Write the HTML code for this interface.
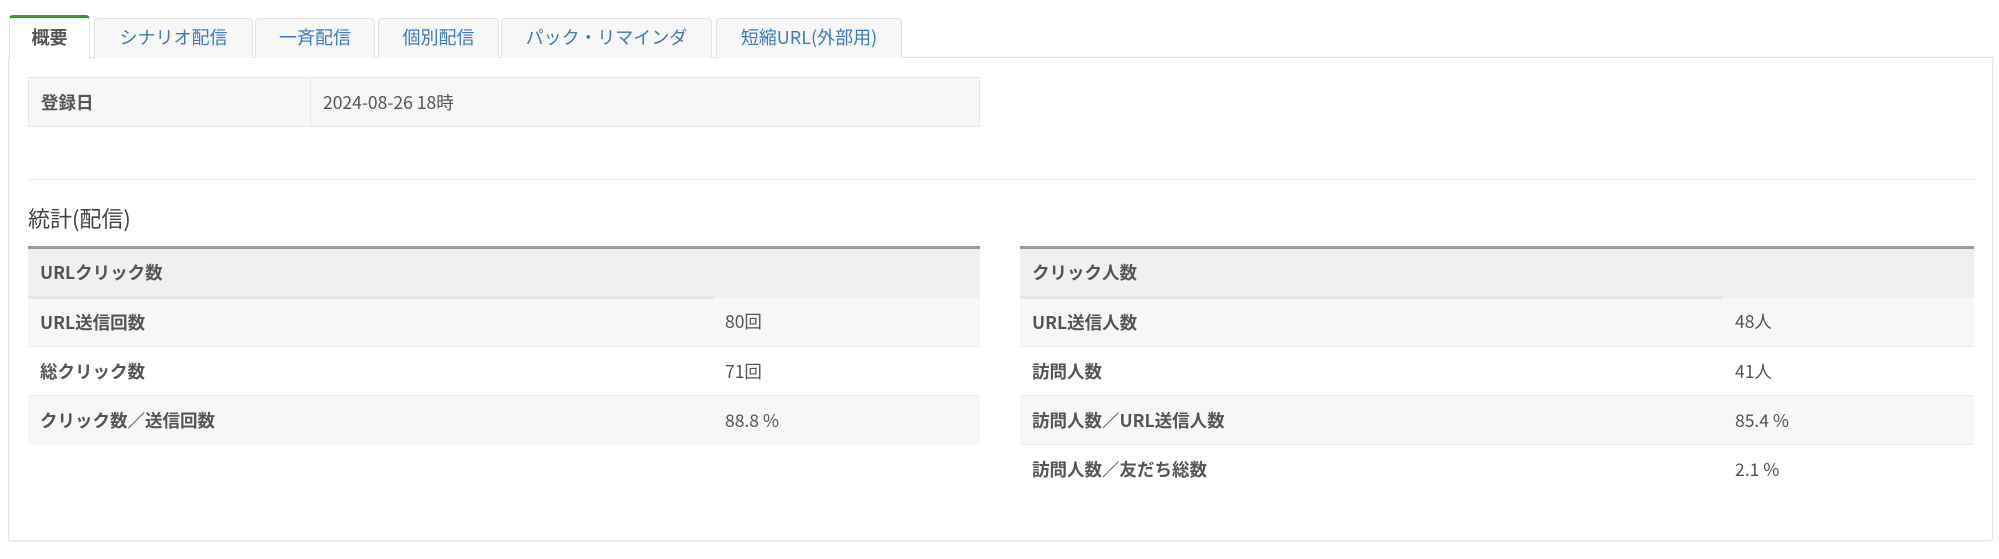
<!DOCTYPE html>
<html><head><meta charset="utf-8"><style>
*{box-sizing:border-box;margin:0;padding:0}
body{width:1999px;height:559px;background:#fff;font-family:"Noto Sans CJK JP","Liberation Sans",sans-serif;color:#555;position:relative;overflow:hidden}
.tab{position:absolute;top:18px;height:40px;border:1px solid #e3e3e3;border-bottom:none;border-radius:4px 4px 0 0;background:#f7f7f8;color:#3b7bbf;font-size:18px;text-align:center;line-height:36px}
.tab.act{top:15px;height:44px;background:#fff;border-top:3px solid #2ca02c;color:#555;font-weight:bold;line-height:38px;z-index:2}
.panel{position:absolute;left:8px;top:57px;width:1985px;height:484px;border:1px solid #e3e3e3;border-radius:0 0 3px 3px;box-shadow:0 1px 1px #eee}
.abs{position:absolute}
table{border-collapse:collapse;position:absolute;font-size:17.5px}
td{height:49px;padding:0 12px;vertical-align:middle;line-height:1.2}
.reg td{border:1px solid #e6e6e6;background:#f7f7f9;height:49px}
.st{border-top:3px solid #999}
.st tr.h td{background:#f0f0f2;font-weight:bold;height:50px}
.st tr.h td.a{border-bottom:3px solid #e3e3e5}
.st tr.o td{background:#f7f7f9}
.st tr.r td{border-top:1px solid #ececec}
.st td.l{font-weight:bold}
</style></head><body>
<div class="panel"></div>
<div class="tab act" style="left:9px;width:81px">概要</div>
<div class="tab" style="left:94px;width:159px">シナリオ配信</div>
<div class="tab" style="left:255px;width:120px">一斉配信</div>
<div class="tab" style="left:378px;width:121px">個別配信</div>
<div class="tab" style="left:501px;width:211px">パック・リマインダ</div>
<div class="tab" style="left:716px;width:186px">短縮URL(外部用)</div>

<table class="reg" style="left:28px;top:77px;width:952px">
<tr><td style="width:282px;font-weight:bold">登録日</td><td>2024-08-26 18時</td></tr></table>

<div class="abs" style="left:28px;top:179px;width:1947px;height:1px;background:#eee"></div>
<div class="abs" style="left:28px;top:203px;font-size:22px;color:#444;line-height:30px">統計(配信)</div>

<table class="st" style="left:28px;top:246px;width:952px">
<tr class="h"><td class="a" style="width:685px">URLクリック数</td><td></td></tr>
<tr class="o"><td class="l">URL送信回数</td><td>80回</td></tr>
<tr class="r"><td class="l">総クリック数</td><td>71回</td></tr>
<tr class="o r"><td class="l">クリック数／送信回数</td><td>88.8 %</td></tr>
</table>

<table class="st" style="left:1020px;top:246px;width:954px">
<tr class="h"><td class="a" style="width:703px">クリック人数</td><td></td></tr>
<tr class="o"><td class="l">URL送信人数</td><td>48人</td></tr>
<tr class="r"><td class="l">訪問人数</td><td>41人</td></tr>
<tr class="o r"><td class="l">訪問人数／URL送信人数</td><td>85.4 %</td></tr>
<tr class="r"><td class="l">訪問人数／友だち総数</td><td>2.1 %</td></tr>
</table>
</body></html>
